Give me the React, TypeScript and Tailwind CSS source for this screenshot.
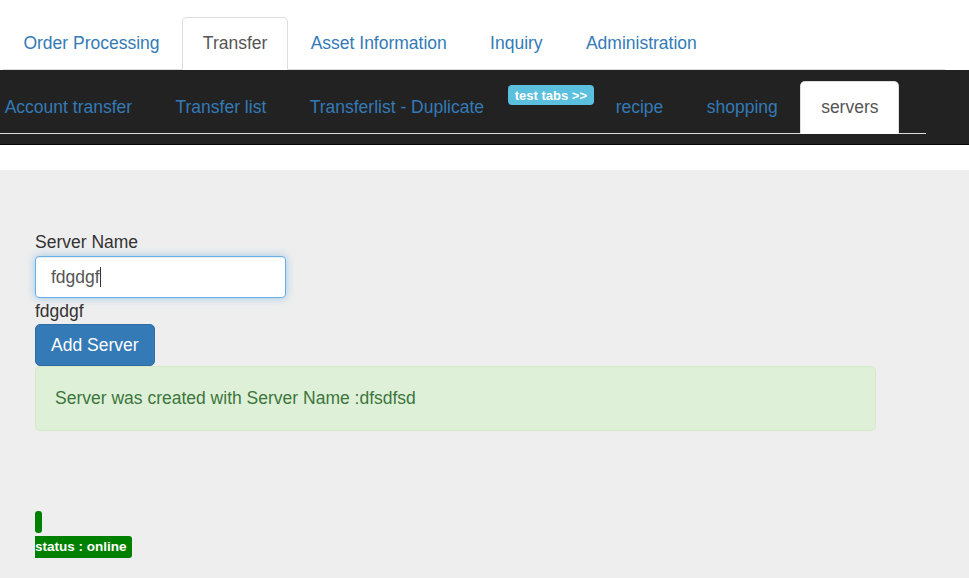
export default function App() {
  const top = ['Order Processing', 'Transfer', 'Asset Information', 'Inquiry', 'Administration']
  const sub = ['Account transfer', 'Transfer list', 'Transferlist - Duplicate']
  return (
    <main className="min-h-screen bg-[#eeeeee] font-['Liberation_Sans',Arial,sans-serif] text-[17.5px] leading-[25px] text-[#333]">
      <div className="bg-white pt-[17px]">
        <ul className="flex ml-[3px] mr-[24px] border-b border-[#ddd]">
          {top.map((t) =>
            t === 'Transfer' ? (
              <li key={t} className="-mb-px mr-[2.5px]">
                <span className="block px-[19.4px] py-[13px] bg-white border border-[#ddd] border-b-transparent rounded-t-[5px] text-[#555]">
                  {t}
                </span>
              </li>
            ) : (
              <li key={t} className="-mb-px mr-[2.5px]">
                <a className="block px-[19.4px] py-[13px] border border-transparent text-[#337ab7]">{t}</a>
              </li>
            )
          )}
        </ul>
      </div>

      <div className="bg-[#222] border-b border-[#080808] pt-[11px] pb-[10px]">
        <ul className="flex items-start ml-[-16px] mr-[43px] border-b border-[#ddd]">
          {sub.map((t) => (
            <li key={t} className="-mb-px mr-[2px]">
              <a className="block px-[19.7px] py-[13px] border border-transparent text-[#337ab7]">{t}</a>
            </li>
          ))}
          <li className="mt-[4px] mx-[1px]">
            <span className="block bg-[#5bc0de] text-white font-bold text-[13px] leading-none px-[7px] pt-[3.5px] pb-[3.5px] rounded-[4px]">
              test tabs &gt;&gt;
            </span>
          </li>
          <li className="-mb-px mr-[2px]">
            <a className="block px-[19.7px] py-[13px] border border-transparent text-[#337ab7]">recipe</a>
          </li>
          <li className="-mb-px mr-[2px]">
            <a className="block px-[19.7px] py-[13px] border border-transparent text-[#337ab7]">shopping</a>
          </li>
          <li className="-mb-px mr-[2px]">
            <span className="block px-[19.7px] py-[13px] bg-white border border-[#ddd] border-b-transparent rounded-t-[5px] text-[#555]">
              servers
            </span>
          </li>
        </ul>
      </div>

      <div className="bg-white h-[25px]" />

      <section className="px-[35px] pt-[60px] pb-[20px]">
        <label className="block mb-[1px]">Server Name</label>
        <div className="w-[251px] h-[42px] bg-white border border-[#66afe9] rounded-[4px] shadow-[inset_0_1px_1px_rgba(0,0,0,.075),0_0_8px_rgba(102,175,233,.6)] px-[15px] flex items-center text-[#555]">
          fdgdgf<span className="inline-block w-px h-[20px] bg-[#333]" />
        </div>
        <div className="mt-[1px]">fdgdgf</div>
        <button className="block bg-[#337ab7] border border-[#2e6da4] text-white rounded-[5px] px-[15px] py-[7.5px] leading-[25px]">
          Add Server
        </button>
        <div className="w-[841px] bg-[#dff0d8] border border-[#d6e9c6] text-[#3c763d] rounded-[5px] p-[19px]">
          Server was created with Server Name :dfsdfsd
        </div>

        <div className="mt-[80px] w-[7px] h-[22px] bg-[#008000] rounded-[3px]" />
        <div className="mt-[3px] inline-block bg-[#008000] text-white font-bold text-[13.5px] leading-[22px] pr-[5px] rounded-r-[3px]">
          status : online
        </div>
      </section>
    </main>
  )
}
